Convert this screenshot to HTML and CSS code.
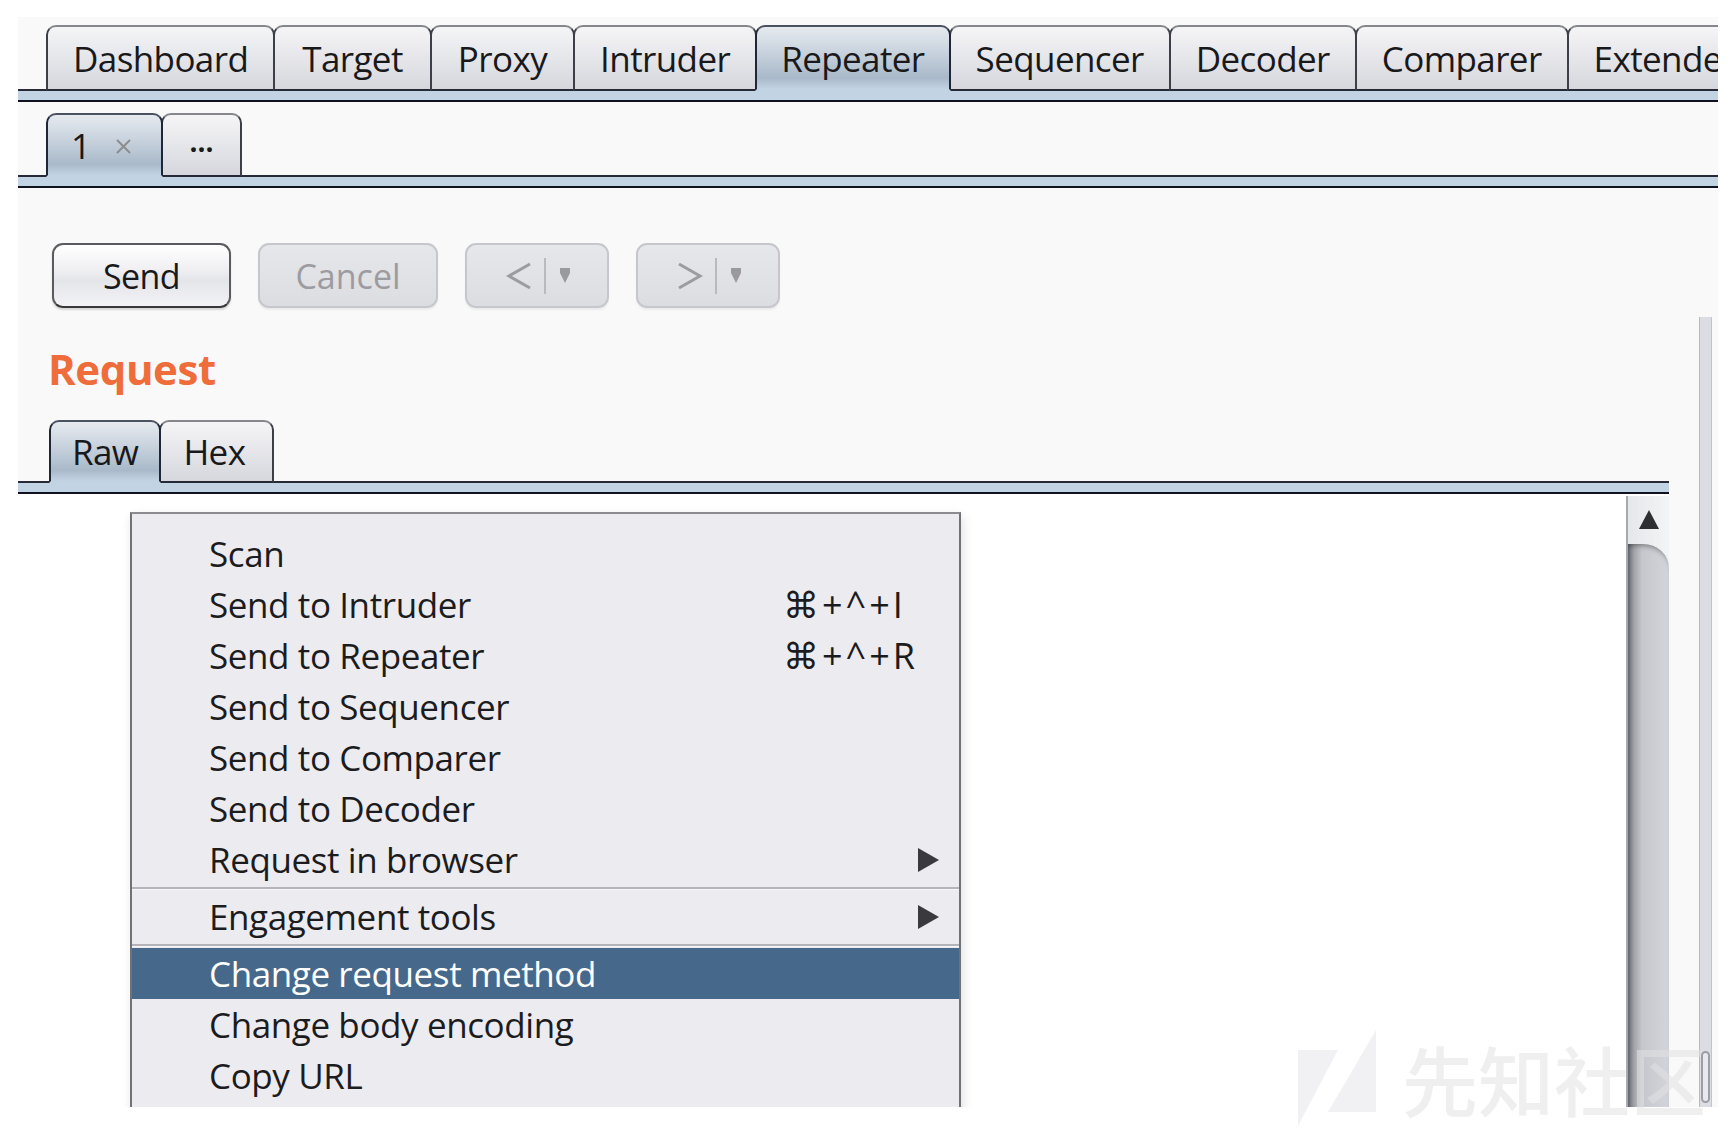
FILE: index.html
```html
<!DOCTYPE html>
<html lang="en">
<head>
<meta charset="utf-8">
<title>Burp Suite - Repeater</title>
<link rel="stylesheet" href="styles.css">
</head>
<body>
<div class="window">
  <div class="tabbar main-tabs">
    <div class="tab">Dashboard</div>
    <div class="tab tab-pad-l">Target</div>
    <div class="tab tab-pad-m">Proxy</div>
    <div class="tab">Intruder</div>
    <div class="tab tab-pad-s active">Repeater</div>
    <div class="tab">Sequencer</div>
    <div class="tab">Decoder</div>
    <div class="tab">Comparer</div>
    <div class="tab">Extender</div>
  </div>
  <div class="band"></div>

  <div class="tabbar sub-tabs">
    <div class="tab active tab-num">
      <span>1</span>
      <svg class="close-x" width="17" height="17" viewBox="0 0 17 17"><path d="M2 2 L15 15 M15 2 L2 15" stroke="#8d8d91" stroke-width="2" fill="none"/></svg>
    </div>
    <div class="tab tab-more">...</div>
  </div>
  <div class="band"></div>

  <div class="toolbar">
    <div class="btn btn-send">Send</div>
    <div class="btn btn-disabled btn-cancel">Cancel</div>
    <div class="btn btn-disabled btn-nav">
      <svg width="26" height="30" viewBox="0 0 26 30"><polyline points="24,3 3,15 24,27" fill="none" stroke="#9c9ca0" stroke-width="3"/></svg>
      <span class="nav-sep"></span>
      <svg width="14" height="16" viewBox="0 0 14 16"><polygon points="2,0 12,0 12,5 7,15 2,5" fill="#9a9a9e"/></svg>
    </div>
    <div class="btn btn-disabled btn-nav">
      <svg width="26" height="30" viewBox="0 0 26 30"><polyline points="2,3 23,15 2,27" fill="none" stroke="#9c9ca0" stroke-width="3"/></svg>
      <span class="nav-sep"></span>
      <svg width="14" height="16" viewBox="0 0 14 16"><polygon points="2,0 12,0 12,5 7,15 2,5" fill="#9a9a9e"/></svg>
    </div>
  </div>

  <div class="split">
    <div class="req-panel">
      <div class="req-title">Request</div>
      <div class="tabbar msg-tabs">
        <div class="tab active tab-raw">Raw</div>
        <div class="tab tab-hex">Hex</div>
      </div>
      <div class="band"></div>
      <div class="editor">
        <div class="editor-body"></div>
        <div class="vbar">
          <div class="vbar-up">
            <svg width="22" height="21" viewBox="0 0 22 21"><polygon points="11,1 21,20 1,20" fill="#2e2f33"/></svg>
          </div>
          <div class="vbar-track"></div>
        </div>

        <div class="ctx-menu">
          <div class="mi"><span class="mi-label">Scan</span><span class="mi-key"></span></div>
          <div class="mi"><span class="mi-label">Send to Intruder</span><span class="mi-key">⌘+^+I</span></div>
          <div class="mi"><span class="mi-label">Send to Repeater</span><span class="mi-key">⌘+^+R</span></div>
          <div class="mi"><span class="mi-label">Send to Sequencer</span><span class="mi-key"></span></div>
          <div class="mi"><span class="mi-label">Send to Comparer</span><span class="mi-key"></span></div>
          <div class="mi"><span class="mi-label">Send to Decoder</span><span class="mi-key"></span></div>
          <div class="mi"><span class="mi-label">Request in browser</span><span class="mi-arrow"></span></div>
          <div class="mi-sep"></div>
          <div class="mi"><span class="mi-label">Engagement tools</span><span class="mi-arrow"></span></div>
          <div class="mi-sep"></div>
          <div class="mi hl"><span class="mi-label">Change request method</span></div>
          <div class="mi"><span class="mi-label">Change body encoding</span></div>
          <div class="mi"><span class="mi-label">Copy URL</span></div>
        </div>
      </div>
    </div>
    <div class="outer-scroll"><div class="outer-thumb"></div></div>
  </div>
</div>

<div class="watermark">
  <svg width="78" height="96" viewBox="0 0 78 96"><polygon points="0,20 40,20 0,96" /><polygon points="78,0 78,82 30,82" /></svg>
  <span class="wm-text">先知社区</span>
</div>
</body>
</html>
```
FILE: styles.css
```css
body {
  margin: 0;
  background: #ffffff;
  font-family: "Open Sans", "DejaVu Sans", sans-serif;
  font-weight: 500;
  color: #19191b;
  position: relative;
  min-height: 1136px;
}

.window {
  margin: 17px 14px 0 18px;
  height: 1090px;
  background: #f9f9f9;
  display: flex;
  flex-direction: column;
  overflow: hidden;
}

/* ---------- tab bars ---------- */
.tabbar {
  display: flex;
  align-items: flex-end;
  white-space: nowrap;
  overflow: hidden;
  flex-shrink: 0;
  box-sizing: border-box;
  background: linear-gradient(to top, #262a37 2px, transparent 2px);
}

.tab {
  flex-shrink: 0;
  box-sizing: border-box;
  height: 66px;
  display: flex;
  align-items: center;
  padding: 0 25px;
  border: 2px solid #3c3f48;
  border-top-color: #86878d;
  border-bottom-color: #262a37;
  border-radius: 10px 10px 0 0;
  background: linear-gradient(#f5f5f7, #d6d7dd);
  font-size: 35px;
  letter-spacing: -0.6px;
  margin-right: -2px;
  position: relative;
}

.tab-pad-l {
  padding: 0 27px;
}
.tab-pad-m {
  padding: 0 26px;
}
.tab-pad-s {
  padding: 0 24px;
}

.tab.active {
  background: linear-gradient(#e6eaef 0%, #c9d3de 40%, #a9b9c9 82%, #c2d3e3 100%);
  border-color: #1f2636;
  border-top-color: #4b5262;
  border-bottom-color: #c2d3e3;
  z-index: 1;
}

.band {
  flex-shrink: 0;
  height: 9px;
  background: #c2d3e3;
  border-bottom: 2px solid #10131f;
}

.main-tabs {
  padding: 8px 0 0 28px;
  height: 74px;
}

.sub-tabs {
  padding: 11px 0 0 28px;
  height: 75px;
}
.sub-tabs .tab {
  height: 64px;
}
.tab-num {
  width: 117px;
  padding: 0 0 0 23px;
  gap: 25px;
}
.close-x {
  margin-top: 2px;
}
.tab-more {
  width: 81px;
  padding: 0;
  justify-content: center;
  font-weight: 700;
  font-size: 28px;
  letter-spacing: 0;
  padding-bottom: 8px;
}

/* ---------- toolbar ---------- */
.toolbar {
  flex-shrink: 0;
  display: flex;
  gap: 27px;
  padding: 55px 0 0 34px;
}

.btn {
  height: 65px;
  box-sizing: border-box;
  border-radius: 11px;
  display: flex;
  align-items: center;
  justify-content: center;
  font-size: 34px;
  letter-spacing: -0.6px;
}

.btn-send {
  width: 179px;
  border: 2px solid #5a5a5f;
  border-bottom-color: #38383c;
  background: linear-gradient(#ffffff, #f0f0f3 40%, #e4e5e9 58%, #f3f3f6);
  box-shadow: 0 2px 2px rgba(0, 0, 0, 0.14);
}

.btn-disabled {
  border: 2px solid #c6c7cc;
  background: linear-gradient(#e6e7ea, #dcdde1);
  color: #9c9ca0;
  box-shadow: 0 2px 2px rgba(0, 0, 0, 0.06);
}

.btn-cancel {
  width: 180px;
  letter-spacing: 0;
}

.btn-nav {
  width: 144px;
  gap: 12px;
  padding-left: 4px;
}

.nav-sep {
  width: 2px;
  height: 36px;
  background: #b9b9be;
}

/* ---------- request panel ---------- */
.split {
  flex: 1;
  min-height: 0;
  display: flex;
  margin-top: 9px;
}

.req-panel {
  flex: 1;
  min-width: 0;
  display: flex;
  flex-direction: column;
}

.req-title {
  margin: 30px 0 0 30px;
  font-size: 42px;
  line-height: 44px;
  font-weight: 700;
  color: #ef6d3b;
  letter-spacing: -0.4px;
}

.msg-tabs {
  margin-top: 29px;
  padding-left: 31px;
  height: 63px;
}
.msg-tabs .tab {
  height: 63px;
}
.tab-raw {
  padding: 0 21px;
}
.tab-hex {
  padding: 0 27px 0 22px;
}

.editor {
  flex: 1;
  min-height: 0;
  display: flex;
  background: #ffffff;
  position: relative;
  overflow: hidden;
}

.editor-body {
  flex: 1;
}

.vbar {
  width: 43px;
  display: flex;
  flex-direction: column;
  border-left: 2px solid #a9aaaf;
  box-sizing: border-box;
  background: linear-gradient(to right, #e6e7ea, #f3f4f6);
  margin-top: 2px;
}

.vbar-up {
  height: 48px;
  box-sizing: border-box;
  padding-top: 13px;
  display: flex;
  justify-content: center;
}

.vbar-track {
  flex: 1;
  border-top-right-radius: 26px 24px;
  background: linear-gradient(to right, #66676c 0, #a2a3a8 6px, #c6c7cc 14px, #d4d5da 100%);
  box-shadow: inset 0 5px 5px -3px rgba(0, 0, 0, 0.35);
}

.outer-scroll {
  width: 13px;
  margin: 0 6px 0 30px;
  box-sizing: border-box;
  border-left: 1px solid #b8b9bf;
  border-right: 1px solid #c3c4c9;
  background: #dcdde2;
  display: flex;
  flex-direction: column;
  justify-content: flex-end;
  padding: 0 1px 4px;
}

.outer-thumb {
  height: 52px;
  box-sizing: border-box;
  border: 2px solid #9d9ea5;
  border-radius: 6px;
  background: #e8e9ec;
}

/* ---------- context menu ---------- */
.ctx-menu {
  position: absolute;
  left: 112px;
  top: 18px;
  width: 831px;
  box-sizing: border-box;
  border: 2px solid #717176;
  border-top-color: #8c8c90;
  background: #ececf0;
  padding: 14px 0 60px;
  font-size: 35px;
  letter-spacing: -0.4px;
  color: #1c1c1e;
  box-shadow: 2px 4px 10px rgba(0, 0, 0, 0.12);
}

.mi {
  display: flex;
  align-items: center;
  height: 51px;
  padding: 0 20px 0 77px;
}

.mi-label {
  flex: 1;
}

.mi-key {
  width: 156px;
  font-size: 36px;
  letter-spacing: 3px;
}

.mi-arrow {
  width: 0;
  height: 0;
  border-left: 21px solid #3a3a3e;
  border-top: 12px solid transparent;
  border-bottom: 12px solid transparent;
}

.mi-sep {
  height: 2px;
  margin: 2px 0 1px;
  background: #b3b3ba;
  border-bottom: 1px solid #f7f7f9;
}

.mi.hl {
  background: #46698b;
  color: #ffffff;
}

/* ---------- watermark ---------- */
.watermark {
  position: absolute;
  left: 1298px;
  top: 1030px;
  display: flex;
  align-items: center;
  gap: 26px;
  pointer-events: none;
  z-index: 5;
}
.watermark svg {
  fill: rgba(225, 225, 228, 0.45);
}
.wm-text {
  font-family: "Noto Sans CJK SC", sans-serif;
  font-size: 76px;
  line-height: 96px;
  color: rgba(225, 225, 228, 0.55);
}
```
